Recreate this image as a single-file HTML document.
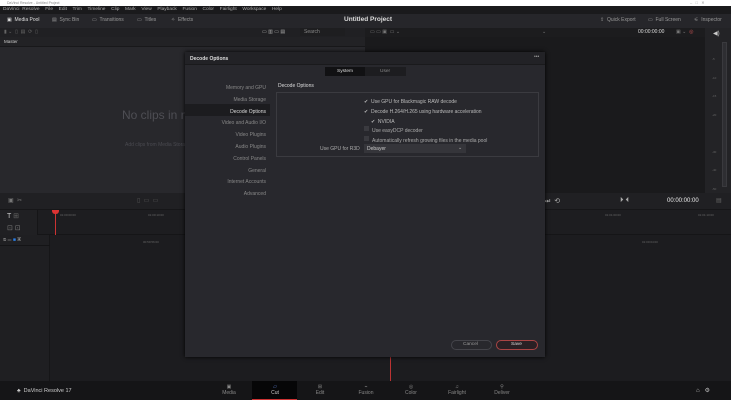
<!DOCTYPE html>
<html><head><style>
*{margin:0;padding:0;box-sizing:border-box}
body{width:731px;height:400px;overflow:hidden;background:#1e1e21;font-family:"Liberation Sans",sans-serif;color:#9a9aa0;position:relative;font-size:5px}
.a{position:absolute}
.t{position:absolute;white-space:nowrap}
</style></head><body>
<div class="a" style="left:0;top:0;width:731px;height:6px;background:#fff"></div>
<div class="t" style="left:7px;top:1px;font-size:3.5px;color:#888">DaVinci Resolve - Untitled Project</div>
<div class="t" style="left:690px;top:0px;font-size:4px;color:#999">–&nbsp;&nbsp;&nbsp;□&nbsp;&nbsp;&nbsp;✕</div>
<div class="a" style="left:0;top:6px;width:731px;height:8px;background:#1a1a1c"></div>
<div class="t" style="left:3px;top:7px;font-size:4.8px;color:#aaa;word-spacing:1.5px">DaVinci Resolve&nbsp; File&nbsp; Edit&nbsp; Trim&nbsp; Timeline&nbsp; Clip&nbsp; Mark&nbsp; View&nbsp; Playback&nbsp; Fusion&nbsp; Color&nbsp; Fairlight&nbsp; Workspace&nbsp; Help</div>
<div class="a" style="left:0;top:14px;width:731px;height:14px;background:#26262a"></div>
<div class="t" style="left:7px;top:17px;font-size:5px;color:#ddd">▣ &nbsp;Media Pool</div>
<div class="t" style="left:52px;top:17px;font-size:5px;color:#999">▤ &nbsp;Sync Bin</div>
<div class="t" style="left:92px;top:17px;font-size:5px;color:#999">▭ &nbsp;Transitions</div>
<div class="t" style="left:137px;top:17px;font-size:5px;color:#999">▭ &nbsp;Titles</div>
<div class="t" style="left:171px;top:17px;font-size:5px;color:#999">✧ &nbsp;Effects</div>
<div class="t" style="left:344px;top:16px;font-size:6.5px;color:#ddd;font-weight:bold">Untitled Project</div>
<div class="t" style="left:600px;top:17px;font-size:5px;color:#999">⇪ &nbsp;Quick Export</div>
<div class="t" style="left:648px;top:17px;font-size:5px;color:#999">▭ &nbsp;Full Screen</div>
<div class="t" style="left:694px;top:17px;font-size:5px;color:#999">⚟ &nbsp;Inspector</div>
<div class="a" style="left:0;top:28px;width:365px;height:9px;background:#202023"></div>
<div class="a" style="left:365px;top:28px;width:340px;height:9px;background:#1c1c1e"></div>
<div class="t" style="left:4px;top:29px;font-size:5px;color:#666">▮ ⌄ &nbsp;▯ &nbsp;▤ &nbsp;⟳ &nbsp;▯</div>
<div class="t" style="left:262px;top:29px;font-size:5px;color:#aaa">▭ ▥ ▭ ▤</div>
<div class="a" style="left:300px;top:28px;width:45px;height:8px;background:#1e1e20"></div>
<div class="t" style="left:304px;top:29px;font-size:5px;color:#888">Search</div>
<div class="t" style="left:370px;top:29px;font-size:5px;color:#777">▭ ▭ ▣ &nbsp;▭ ⌄</div>
<div class="t" style="left:542px;top:29px;font-size:5px;color:#777">⌄</div>
<div class="t" style="left:638px;top:29px;font-size:5px;color:#ddd">00:00:00:00</div>
<div class="t" style="left:676px;top:29px;font-size:5px;color:#777">▣ ⌄ &nbsp;<span style="color:#c55">◎</span></div>
<div class="a" style="left:0;top:37px;width:365px;height:10px;background:#222225;border-bottom:1px solid #18181a"></div>
<div class="t" style="left:4px;top:39px;font-size:4.5px;color:#ccc">Master</div>
<div class="a" style="left:0;top:47px;width:365px;height:146px;background:#28282c"></div>
<div class="t" style="left:122px;top:108px;font-size:12px;color:#4e4e54">No clips in media pool</div>
<div class="t" style="left:125px;top:142px;font-size:5px;color:#4a4a50">Add clips from Media Storage</div>
<div class="a" style="left:365px;top:37px;width:340px;height:156px;background:#1a1a1c"></div>
<div class="a" style="left:705px;top:28px;width:26px;height:165px;background:#232326"></div>
<div class="t" style="left:713px;top:30px;font-size:6px;color:#ccc">◀︎)</div>
<div class="a" style="left:722px;top:42px;width:5px;height:145px;background:#2e2e32;border:1px solid #3a3a3e"></div>
<div class="t" style="left:712px;top:50px;font-size:3px;color:#666;line-height:18.5px">-5<br>-10<br>-15<br>-20<br><br>-30<br>-40<br>-50</div>
<div class="a" style="left:0;top:193px;width:731px;height:17px;background:#202023;border-bottom:1px solid #161618"></div>
<div class="t" style="left:8px;top:197px;font-size:6px;color:#777">▣ &nbsp;✂</div>
<div class="t" style="left:137px;top:197px;font-size:6px;color:#555">▯ &nbsp;▭ &nbsp;▭</div>
<div class="t" style="left:544px;top:197px;font-size:7px;color:#aaa">⏭ &nbsp;⟲</div>
<div class="t" style="left:620px;top:197px;font-size:7px;color:#aaa">⏵ ⏴</div>
<div class="t" style="left:667px;top:198px;font-size:6px;color:#eee">00:00:00:00</div>
<div class="t" style="left:716px;top:197px;font-size:6px;color:#666">▤</div>
<div class="a" style="left:0;top:210px;width:731px;height:25px;background:#1d1d20;border-bottom:1px solid #151517"></div>
<div class="a" style="left:0;top:210px;width:38px;height:25px;background:#202023;border-right:1px solid #151517"></div>
<div class="t" style="left:7px;top:212px;font-size:7px;color:#ccc">T <span style="color:#666">⊞</span></div>
<div class="t" style="left:7px;top:224px;font-size:7px;color:#777">⊡ ⊡</div>
<div class="t" style="left:60px;top:213px;font-size:3px;color:#666">01:00:00:00</div>
<div class="t" style="left:148px;top:213px;font-size:3px;color:#666">01:00:10:00</div>
<div class="t" style="left:605px;top:213px;font-size:3px;color:#666">01:01:00:00</div>
<div class="t" style="left:698px;top:213px;font-size:3px;color:#666">01:01:10:00</div>
<div class="a" style="left:0;top:235px;width:731px;height:146px;background:#1c1c1f"></div>
<div class="a" style="left:0;top:235px;width:50px;height:146px;background:#1f1f22;border-right:1px solid #161618"></div>
<div class="a" style="left:0;top:245px;width:50px;height:1px;background:#141416"></div>
<div class="t" style="left:3px;top:237px;font-size:5px;color:#bbb">⦸ <span style="color:#666">▭</span> <span style="color:#2a7fe8">■</span> <span style="color:#888">▣</span></div>
<div class="t" style="left:143px;top:240px;font-size:3px;color:#666">00:59:56:00</div>
<div class="t" style="left:642px;top:240px;font-size:3px;color:#666">01:00:04:00</div>
<div class="a" style="left:55px;top:212px;width:1px;height:23px;background:#c33"></div>
<div class="a" style="left:52px;top:210px;width:7px;height:4px;background:#d33;border-radius:0 0 3px 3px"></div>
<div class="a" style="left:390px;top:357px;width:1px;height:24px;background:#b33"></div>
<div class="a" style="left:0;top:381px;width:731px;height:19px;background:#151517"></div>
<div class="t" style="left:17px;top:388px;font-size:5.5px;color:#ccc">♣ &nbsp;DaVinci Resolve 17</div>
<div class="a" style="left:252px;top:381px;width:45px;height:19px;background:#060607;border-bottom:1px solid #c33"></div>
<div class="t" style="left:222px;top:384px;font-size:5px;color:#888;text-align:center;width:14px">▣<br>Media</div>
<div class="t" style="left:268px;top:384px;font-size:5px;color:#ccc;text-align:center;width:14px"><span style="color:#5f7fd0">▱</span><br>Cut</div>
<div class="t" style="left:313px;top:384px;font-size:5px;color:#888;text-align:center;width:14px">⊞<br>Edit</div>
<div class="t" style="left:356px;top:384px;font-size:5px;color:#888;text-align:center;width:20px">⌁<br>Fusion</div>
<div class="t" style="left:403px;top:384px;font-size:5px;color:#888;text-align:center;width:16px">◎<br>Color</div>
<div class="t" style="left:446px;top:384px;font-size:5px;color:#888;text-align:center;width:22px">♫<br>Fairlight</div>
<div class="t" style="left:492px;top:384px;font-size:5px;color:#888;text-align:center;width:20px">⚲<br>Deliver</div>
<div class="t" style="left:696px;top:387px;font-size:6px;color:#bbb">⌂ &nbsp;&nbsp;⚙</div>
<div class="a" style="left:185px;top:52px;width:360px;height:305px;background:#28282d;box-shadow:0 0 4px #000"></div>
<div class="a" style="left:185px;top:52px;width:360px;height:13px;background:#222226;border-bottom:1px solid #1a1a1c"></div>
<div class="t" style="left:190px;top:56px;font-size:5px;color:#ddd;font-weight:bold">Decode Options</div>
<div class="t" style="left:534px;top:54px;font-size:5px;color:#999">•••</div>
<div class="a" style="left:325px;top:67px;width:81px;height:9px;background:#1d1d20"></div>
<div class="a" style="left:325px;top:67px;width:40px;height:9px;background:#111113"></div>
<div class="t" style="left:337px;top:69px;font-size:4.8px;color:#ddd">System</div>
<div class="t" style="left:380px;top:69px;font-size:4.8px;color:#888">User</div>
<div class="a" style="left:185px;top:104px;width:85px;height:12px;background:#1c1c1f"></div>
<div class="t" style="left:185px;top:83px;width:81px;text-align:right;font-size:5px;color:#888;line-height:11.8px">Memory and GPU<br>Media Storage<br><span style="color:#ddd">Decode Options</span><br>Video and Audio I/O<br>Video Plugins<br>Audio Plugins<br>Control Panels<br>General<br>Internet Accounts<br>Advanced</div>
<div class="t" style="left:278px;top:83px;font-size:5px;color:#ddd">Decode Options</div>
<div class="a" style="left:276px;top:92px;width:263px;height:65px;border:1px solid #3b3b40"></div>
<div class="t" style="left:364px;top:97px;font-size:5px;color:#bbb;line-height:10.1px">✔&nbsp; Use GPU for Blackmagic RAW decode<br>✔&nbsp; Decode H.264/H.265 using hardware acceleration<br>&nbsp;&nbsp;&nbsp;&nbsp;&nbsp;✔&nbsp; NVIDIA</div>
<div class="a" style="left:364px;top:126px;width:5px;height:5px;background:#3a3a3f"></div>
<div class="a" style="left:364px;top:136px;width:5px;height:5px;background:#3a3a3f"></div>
<div class="t" style="left:372px;top:126px;font-size:5px;color:#aaa;line-height:10px">Use easyDCP decoder<br>Automatically refresh growing files in the media pool</div>
<div class="t" style="left:320px;top:146px;font-size:5px;color:#aaa">Use GPU for R3D</div>
<div class="a" style="left:364px;top:144px;width:102px;height:9px;background:#35353a"></div>
<div class="t" style="left:367px;top:146px;font-size:5px;color:#ccc">Debayer</div>
<div class="t" style="left:458px;top:145px;font-size:5px;color:#aaa">⌄</div>
<div class="a" style="left:451px;top:340px;width:41px;height:10px;border:1px solid #44444a;border-radius:5px"></div>
<div class="t" style="left:463px;top:342px;font-size:4.8px;color:#999">Cancel</div>
<div class="a" style="left:496px;top:340px;width:42px;height:10px;border:1px solid #a44;border-radius:5px;background:#2a2024"></div>
<div class="t" style="left:511px;top:342px;font-size:4.8px;color:#ddd">Save</div>
</body></html>
